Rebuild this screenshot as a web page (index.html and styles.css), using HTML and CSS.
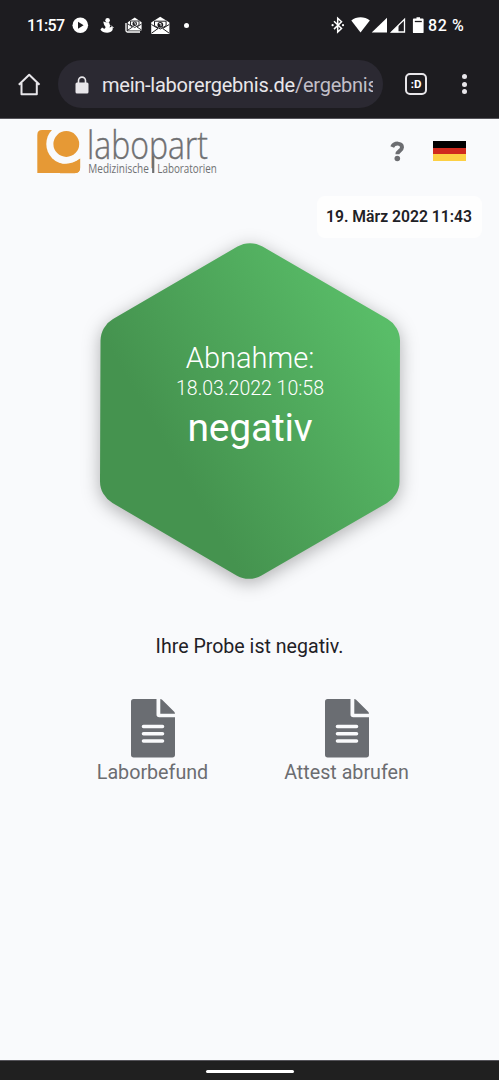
FILE: index.html
```html
<!DOCTYPE html>
<html lang="de">
<head>
    <meta charset="UTF-8">
    <meta name="viewport" content="width=device-width, initial-scale=1.0">
    <title>Mein Laborergebnis</title>
    <link rel="stylesheet" href="styles.css">
</head>
<body>
    <div class="browser">
        <div class="status">
            <span class="clock">11:57</span>
            <svg class="notifications" width="112" height="20" viewBox="72 15 112 20">
                <circle cx="80.300" cy="25.300" r="7.800" fill="#fff"/>
                <path d="M78 21.800v7l5.600-3.500z" fill="#1d1c20"/>
                <!-- seated figure -->
                <circle cx="107.600" cy="20.200" r="2.300" fill="#fff"/>
                <path d="M103.300 21.500l2.500.8h3.200l1.200 3.500-.7 1.700 2.300-.8 1 .8-.2 2.500c-1.200 1.800-3 2.800-5.500 2.800-3 0-5.300-1-6.700-3.200l1.700-2 2 1.200c1.200-.5 1.700-1.200 1.200-2.300-1.200-1.200-1.700-2.800-2-5z" fill="#fff"/>
                <path d="M111 25.500l2.500 2.500" stroke="#fff" stroke-width="1"/>
                <!-- mails -->
                <path d="M126 23v7.500q0 1.500 1.500 1.500H140" fill="none" stroke="#fff" stroke-width="1.300"/>
                <path d="M127.800 22.200l6.900-4.600 6.900 4.600v8.300h-13.800z" fill="#fff"/>
                <path d="M130.500 21h8.500v4l-4.200 2.500-4.300-2.500zM128 24l4.500 3-4.500 3M141.500 24l-4.500 3 4.500 3" fill="none" stroke="#1d1c20" stroke-width=".9"/>
                <circle cx="134.700" cy="23.800" r="2.300" fill="#1d1c20"/>
                <path d="M133.900 22.800h1.400v2" fill="none" stroke="#fff" stroke-width=".8"/>
                <path d="M151.200 22.500l9-5.700 9.200 5.700v11.400h-18.200z" fill="#fff"/>
                <path d="M154.500 21.200h11.600v4.500l-5.800 3.300-5.800-3.300zM151.500 24.500l6.500 4-6.500 4.700M169.200 24.500l-6.500 4 6.500 4.700" fill="none" stroke="#1d1c20" stroke-width="1"/>
                <circle cx="160.300" cy="24.800" r="2.900" fill="#1d1c20"/>
                <path d="M159.200 23.600h1.800v2.600" fill="none" stroke="#fff" stroke-width=".9"/>
            </svg>
            <span class="more-dot"></span>
            <svg class="signals" width="94" height="20" viewBox="330 15 94 20">
                <path d="M334 21.200l7.500 7.300-3.800 3.500V18.300l3.800 3.400-7.500 7.400" fill="none" stroke="#fff" stroke-width="1.500"/>
                <circle cx="332.600" cy="25.200" r="1.100" fill="#fff"/>
                <circle cx="343" cy="25.200" r="1.100" fill="#fff"/>
                <path d="M351.300 20.600c5.200-4.400 13.300-4.400 18.500 0l-9.300 12z" fill="#fff"/>
                <path d="M387 17.800V32.600h-15.300z" fill="#fff"/>
                <path d="M404.500 19.300V32h-13z" fill="none" stroke="#fff" stroke-width="1.300"/>
                <path d="M398.500 25.500v6.800h-7.500z" fill="#fff"/>
                <path d="M413.800 18.500h2.700v-1.300h3.500v1.300h2.700q.9 0 .9.900v12.800q0 .9-.9.900h-8.900q-.9 0-.9-.9v-12.800q0-.9.900-.9z" fill="#fff"/>
                <path d="M414.800 21.500h7" stroke="#1d1c20" stroke-width="1.300"/>
            </svg>
            <span class="battery">82 %</span>
        </div>
        <div class="toolbar">
            <svg class="home" width="24" height="24" viewBox="17 72 24 24" fill="none" stroke="#e8e6ea" stroke-width="2">
                <path d="M18.800 84.700L29.200 74.800l10.300 9.900M21.500 83v11.200h15.300V83" stroke-linejoin="round"/>
            </svg>
            <div class="address">
                <svg width="14" height="18" viewBox="0 0 14 18">
                    <path d="M3.500 8V4.600a3.500 3.500 0 0 1 7 0V8" fill="none" stroke="#e8e6ea" stroke-width="1.600"/>
                    <rect x=".5" y="6.500" width="13" height="11" rx="1.500" fill="#e8e6ea"/>
                </svg>
                <div class="url">mein-laborergebnis.de<span>/ergebnis</span></div>
            </div>
            <div class="tabs">:D</div>
            <div class="menu"><i></i><i></i><i></i></div>
        </div>
    </div>

    <main>
        <header class="header">
            <svg class="logo" width="184" height="50" viewBox="35 126 184 50">
                <path d="M42 130h38v38q0 5-5 5H37.300V135q0-5 4.700-5z" fill="#e69935"/>
                <circle cx="66.300" cy="144" r="20" fill="#f9fafc"/>
                <path d="M66 124h16v34.500h-4z" fill="#f9fafc"/>
                <path d="M80.200 158.500v9q0 5.700-5.500 5.700H60v-9.500c8 1 15-1 20.200-5.200z" fill="#e69935"/>
                <circle cx="66.300" cy="144" r="12.900" fill="#e69935"/>
                <text class="logo-name" x="87" y="159" textLength="121" lengthAdjust="spacingAndGlyphs">labopart</text>
                <text class="logo-sub" x="88.300" y="172.600" textLength="60.500" lengthAdjust="spacingAndGlyphs">Medizinische</text>
                <text class="logo-sub" x="157.300" y="172.600" textLength="59.500" lengthAdjust="spacingAndGlyphs">Laboratorien</text>
                <path d="M153.200 156v17" stroke="#6f7072" stroke-width="2.200"/>
            </svg>
            <svg class="help" width="16" height="21" viewBox="0 0 16 21">
                <path d="M2.200 6C4.300 1.300 12 1.600 12 6.300c0 3.600-4.600 3.500-4.600 6.900" fill="none" stroke="#6c6d71" stroke-width="4"/>
                <circle cx="7.300" cy="17.500" r="2.800" fill="#6c6d71"/>
            </svg>
            <div class="flag"><i class="black"></i><i class="red"></i><i class="gold"></i></div>
        </header>

        <div class="timestamp">19. März 2022 11:43</div>

        <section class="result">
            <svg class="hexagon" width="340" height="376" viewBox="80 223 340 376">
                <defs>
                    <linearGradient id="green" gradientUnits="userSpaceOnUse" x1="172" y1="456" x2="388" y2="331">
                        <stop offset="0" stop-color="#45934f"/>
                        <stop offset="1" stop-color="#59bd68"/>
                    </linearGradient>
                </defs>
                <path d="M237.500 246.600A25 25 0 0 1 262.500 246.600L387.500 319A25 25 0 0 1 400 340.600L399.500 481.400A25 25 0 0 1 387 503L261.500 575.400A25 25 0 0 1 236.500 575.400L112.500 503A25 25 0 0 1 100 481.400L100.500 340.600A25 25 0 0 1 113 319Z" fill="url(#green)"/>
            </svg>
            <div class="result-text">
                <div class="label">Abnahme:</div>
                <div class="date">18.03.2022 10:58</div>
                <div class="value">negativ</div>
            </div>
        </section>

        <p class="message">Ihre Probe ist negativ.</p>

        <div class="documents">
            <div class="document">
                <svg width="44" height="59" viewBox="0 0 44 59">
                    <path d="M2.700 0H25.500v15.500q0 2.700 2.700 2.700H44v37.600q0 2.700-2.700 2.700H2.700Q0 58.500 0 55.800V2.700Q0 0 2.700 0zM29.300 0q1 0 1.800.8L43.200 12.800q.8.800.8 1.900H29.300z"/>
                    <path class="lines" d="M12.500 27.500h19M12.500 34.700h19M12.500 42h19"/>
                </svg>
                <span>Laborbefund</span>
            </div>
            <div class="document">
                <svg width="44" height="59" viewBox="0 0 44 59">
                    <path d="M2.700 0H25.500v15.500q0 2.700 2.700 2.700H44v37.600q0 2.700-2.700 2.700H2.700Q0 58.500 0 55.800V2.700Q0 0 2.700 0zM29.300 0q1 0 1.800.8L43.200 12.800q.8.800.8 1.900H29.300z"/>
                    <path class="lines" d="M12.500 27.500h19M12.500 34.700h19M12.500 42h19"/>
                </svg>
                <span>Attest abrufen</span>
            </div>
        </div>
    </main>

    <div class="navbar"><div class="handle"></div></div>
</body>
</html>
```
FILE: styles.css
```css
* {
    box-sizing: border-box;
}
body {
    margin: 0;
    height: 1080px;
    display: flex;
    flex-direction: column;
    overflow: hidden;
    font-family: Roboto, sans-serif;
    color: #1f2126;
    background-color: #f9fafc;
}
svg {
    display: block;
    flex: none;
}
.browser {
    height: 119px;
    background-color: #1d1c20;
    border-bottom: 1px solid #55545a;
    color: #fff;
}
.status {
    height: 50px;
    display: flex;
    align-items: center;
    padding-left: 27px;
    font-size: 16px;
    font-weight: 500;
}
.clock {
    width: 45px;
    letter-spacing: -0.6px;
}
.more-dot {
    width: 5px;
    height: 5px;
    border-radius: 50%;
    background-color: #fff;
}
.signals {
    margin-left: 141px;
}
.battery {
    margin-left: 4px;
    white-space: nowrap;
    letter-spacing: 0.6px;
}
.toolbar {
    display: flex;
    align-items: center;
    height: 68px;
    padding-left: 17px;
}
.address {
    width: 325px;
    height: 48px;
    margin-left: 17px;
    padding: 1px 9px 0 17px;
    display: flex;
    align-items: center;
    gap: 13px;
    border-radius: 24px;
    background-color: #2b2932;
}
.url {
    width: 271px;
    overflow: hidden;
    white-space: nowrap;
    font-size: 20px;
    letter-spacing: -0.25px;
    color: #e8e6ea;
}
.url span {
    color: #c2bfc8;
}
.tabs {
    width: 22px;
    height: 22px;
    margin-left: 22px;
    border: 2px solid #e8e6ea;
    border-radius: 5px;
    font-size: 11.500px;
    font-weight: 700;
    line-height: 19px;
    text-align: center;
}
.menu {
    margin-left: 35px;
    display: grid;
    gap: 2.500px;
}
.menu i {
    width: 5px;
    height: 5px;
    border-radius: 50%;
    background-color: #e8e6ea;
}
main {
    flex: 1;
    display: flex;
    flex-direction: column;
}
.header {
    display: flex;
    align-items: center;
    padding: 7px 33px 0 35px;
}
.logo {
    overflow: visible;
}
.logo-name, .logo-sub {
    font-family: "Open Sans", sans-serif;
    fill: #6f7072;
}
.logo-name {
    font-size: 38px;
    font-weight: 300;
    stroke: #6f7072;
    stroke-width: 0.4px;
}
.logo-sub {
    font-size: 12px;
}
.help {
    margin-left: auto;
}
.flag {
    width: 33px;
    height: 20px;
    margin-left: 27px;
    display: flex;
    flex-direction: column;
}
.flag i {
    flex: 1;
}
.black {
    background-color: #000;
}
.red {
    background-color: #d02a1e;
}
.gold {
    background-color: #fdd044;
}
.timestamp {
    align-self: flex-end;
    width: 165px;
    height: 42px;
    margin: 20px 17px 0 0;
    padding-right: 1px;
    border-radius: 8px;
    background-color: #fefefe;
    text-align: center;
    font-size: 15.700px;
    font-weight: 600;
    line-height: 42px;
    white-space: nowrap;
}
.result {
    display: grid;
    justify-content: center;
    margin-top: -15px;
    padding-left: 1px;
}
.hexagon, .result-text {
    grid-area: 1 / 1;
}
.hexagon {
    overflow: visible;
    filter: drop-shadow(0 4px 9px rgba(0, 0, 0, 0.3));
}
.result-text {
    z-index: 1;
    padding-top: 118px;
    color: #fff;
    text-align: center;
    font-weight: 300;
}
.label {
    font-size: 29px;
    line-height: 35px;
}
.date {
    font-size: 19.500px;
    line-height: 25px;
}
.value {
    font-size: 39px;
    font-weight: 400;
    letter-spacing: -0.2px;
    line-height: 55px;
}
.message {
    margin: 36px 0 0;
    font-size: 19.600px;
    line-height: 24px;
    text-align: center;
}
.documents {
    display: grid;
    grid-template-columns: 194px 194px;
    justify-content: center;
    margin-top: 40px;
}
.document {
    display: flex;
    flex-direction: column;
    align-items: center;
    gap: 3px;
    font-size: 19.700px;
    line-height: 24px;
    color: #6c6d71;
}
.document svg {
    fill: #6a6d72;
}
.document .lines {
    fill: none;
    stroke: #f9fafc;
    stroke-width: 3.600;
    stroke-linecap: round;
}
.navbar {
    height: 20px;
    padding-top: 9px;
    border-top: 1px solid #55545a;
    background-color: #202020;
}
.handle {
    width: 88px;
    height: 3px;
    margin: 0 auto;
    border-radius: 2px;
    background-color: #fff;
}
```
